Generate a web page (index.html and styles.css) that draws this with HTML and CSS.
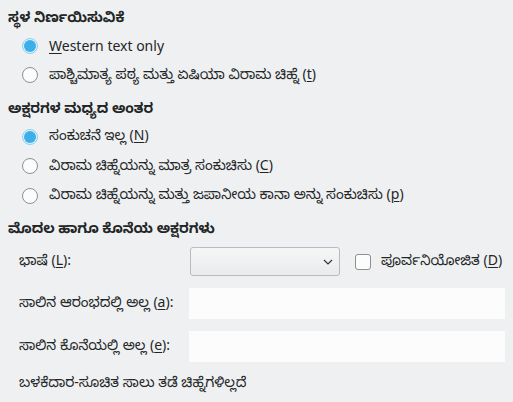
FILE: index.html
```html
<!DOCTYPE html>
<html lang="kn">
<head>
<meta charset="utf-8">
<title>Asian Typography</title>
<link rel="stylesheet" href="styles.css">
</head>
<body>
<div class="page">
  <section class="group">
    <div class="heading">ಸ್ಥಳ ನಿರ್ಣಯಿಸುವಿಕೆ</div>
    <label class="opt"><span class="radio checked"></span><span><u>W</u>estern text only</span></label>
    <label class="opt"><span class="radio"></span><span>ಪಾಶ್ಚಿಮಾತ್ಯ ಪಠ್ಯ ಮತ್ತು ಏಷಿಯಾ ವಿರಾಮ ಚಿಹ್ನೆ (<u>t</u>)</span></label>
  </section>
  <section class="group">
    <div class="heading">ಅಕ್ಷರಗಳ ಮಧ್ಯದ ಅಂತರ</div>
    <label class="opt"><span class="radio checked"></span><span>ಸಂಕುಚನೆ ಇಲ್ಲ (<u>N</u>)</span></label>
    <label class="opt"><span class="radio"></span><span>ವಿರಾಮ ಚಿಹ್ನೆಯನ್ನು ಮಾತ್ರ ಸಂಕುಚಿಸು (<u>C</u>)</span></label>
    <label class="opt"><span class="radio"></span><span>ವಿರಾಮ ಚಿಹ್ನೆಯನ್ನು ಮತ್ತು ಜಪಾನೀಯ ಕಾನಾ ಅನ್ನು ಸಂಕುಚಿಸು (<u>p</u>)</span></label>
  </section>
  <section class="group">
    <div class="heading">ಮೊದಲ ಹಾಗೂ ಕೊನೆಯ ಅಕ್ಷರಗಳು</div>
    <div class="form">
      <div class="lbl">ಭಾಷೆ (<u>L</u>):</div>
      <div class="langrow">
        <div class="combo"><svg class="chev" width="10" height="6" viewBox="0 0 10 6"><path d="M1 1 L5 5 L9 1" fill="none" stroke="#31363b" stroke-width="1.2"/></svg></div>
        <label class="chk"><span class="box"></span><span>ಪೂರ್ವನಿಯೋಜಿತ (<u>D</u>)</span></label>
      </div>
      <div class="lbl">ಸಾಲಿನ ಆರಂಭದಲ್ಲಿ ಅಲ್ಲ (<u>a</u>):</div>
      <div class="field"></div>
      <div class="lbl">ಸಾಲಿನ ಕೊನೆಯಲ್ಲಿ ಅಲ್ಲ (<u>e</u>):</div>
      <div class="field"></div>
    </div>
    <div class="note">ಬಳಕೆದಾರ-ಸೂಚಿತ ಸಾಲು ತಡೆ ಚಿಹ್ನೆಗಳಿಲ್ಲದೆ</div>
  </section>
</div>
</body>
</html>
```
FILE: styles.css
```css
html, body {
  margin: 0;
  padding: 0;
  background: #eff0f1;
}
body {
  font-family: "Noto Sans", "Noto Sans Kannada", sans-serif;
  font-size: 14px;
  color: #232627;
  width: 513px;
  height: 402px;
  overflow: hidden;
}
.page {
  padding: 5px 8px 0 8px;
  display: flex;
  flex-direction: column;
  gap: 6px;
}
.group {
  display: flex;
  flex-direction: column;
}
.heading {
  height: 26px;
  display: flex;
  align-items: center;
  font-weight: bold;
}
.opt {
  height: 29.5px;
  display: flex;
  align-items: center;
  gap: 11px;
  padding-left: 14px;
}
u {
  text-decoration-thickness: 1px;
  text-underline-offset: 2px;
}
.radio {
  width: 16px;
  height: 16px;
  box-sizing: border-box;
  border-radius: 50%;
  border: 1px solid #8d9091;
  background: #fcfcfc;
  flex: none;
  display: flex;
  align-items: center;
  justify-content: center;
}
.radio.checked {
  border-color: #8fd0f0;
  background: #dff1fb;
}
.radio.checked::after {
  content: "";
  width: 12px;
  height: 12px;
  border-radius: 50%;
  background: #3daee9;
}
.form {
  margin-top: 5px;
  display: grid;
  grid-template-columns: 170px 316px;
  row-gap: 12px;
  align-items: center;
  padding-left: 11px;
}
.langrow {
  display: flex;
  align-items: center;
  height: 28px;
}
.combo {
  width: 150px;
  height: 29px;
  box-sizing: border-box;
  margin-left: 1px;
  border: 1px solid #b9bbbd;
  border-radius: 3px;
  background: linear-gradient(#f5f6f6, #eaebec);
  display: flex;
  align-items: center;
  justify-content: flex-end;
  padding-right: 6px;
}
.chk {
  display: flex;
  align-items: center;
  gap: 10px;
  margin-left: 15px;
}
.box {
  width: 16px;
  height: 16px;
  box-sizing: border-box;
  border: 1px solid #8d9091;
  border-radius: 3px;
  background: #fcfcfc;
}
.field {
  height: 31px;
  background: #fcfcfc;
}
.note {
  padding-left: 11px;
  height: 30px;
  margin-top: 7px;
  display: flex;
  align-items: center;
}
```
